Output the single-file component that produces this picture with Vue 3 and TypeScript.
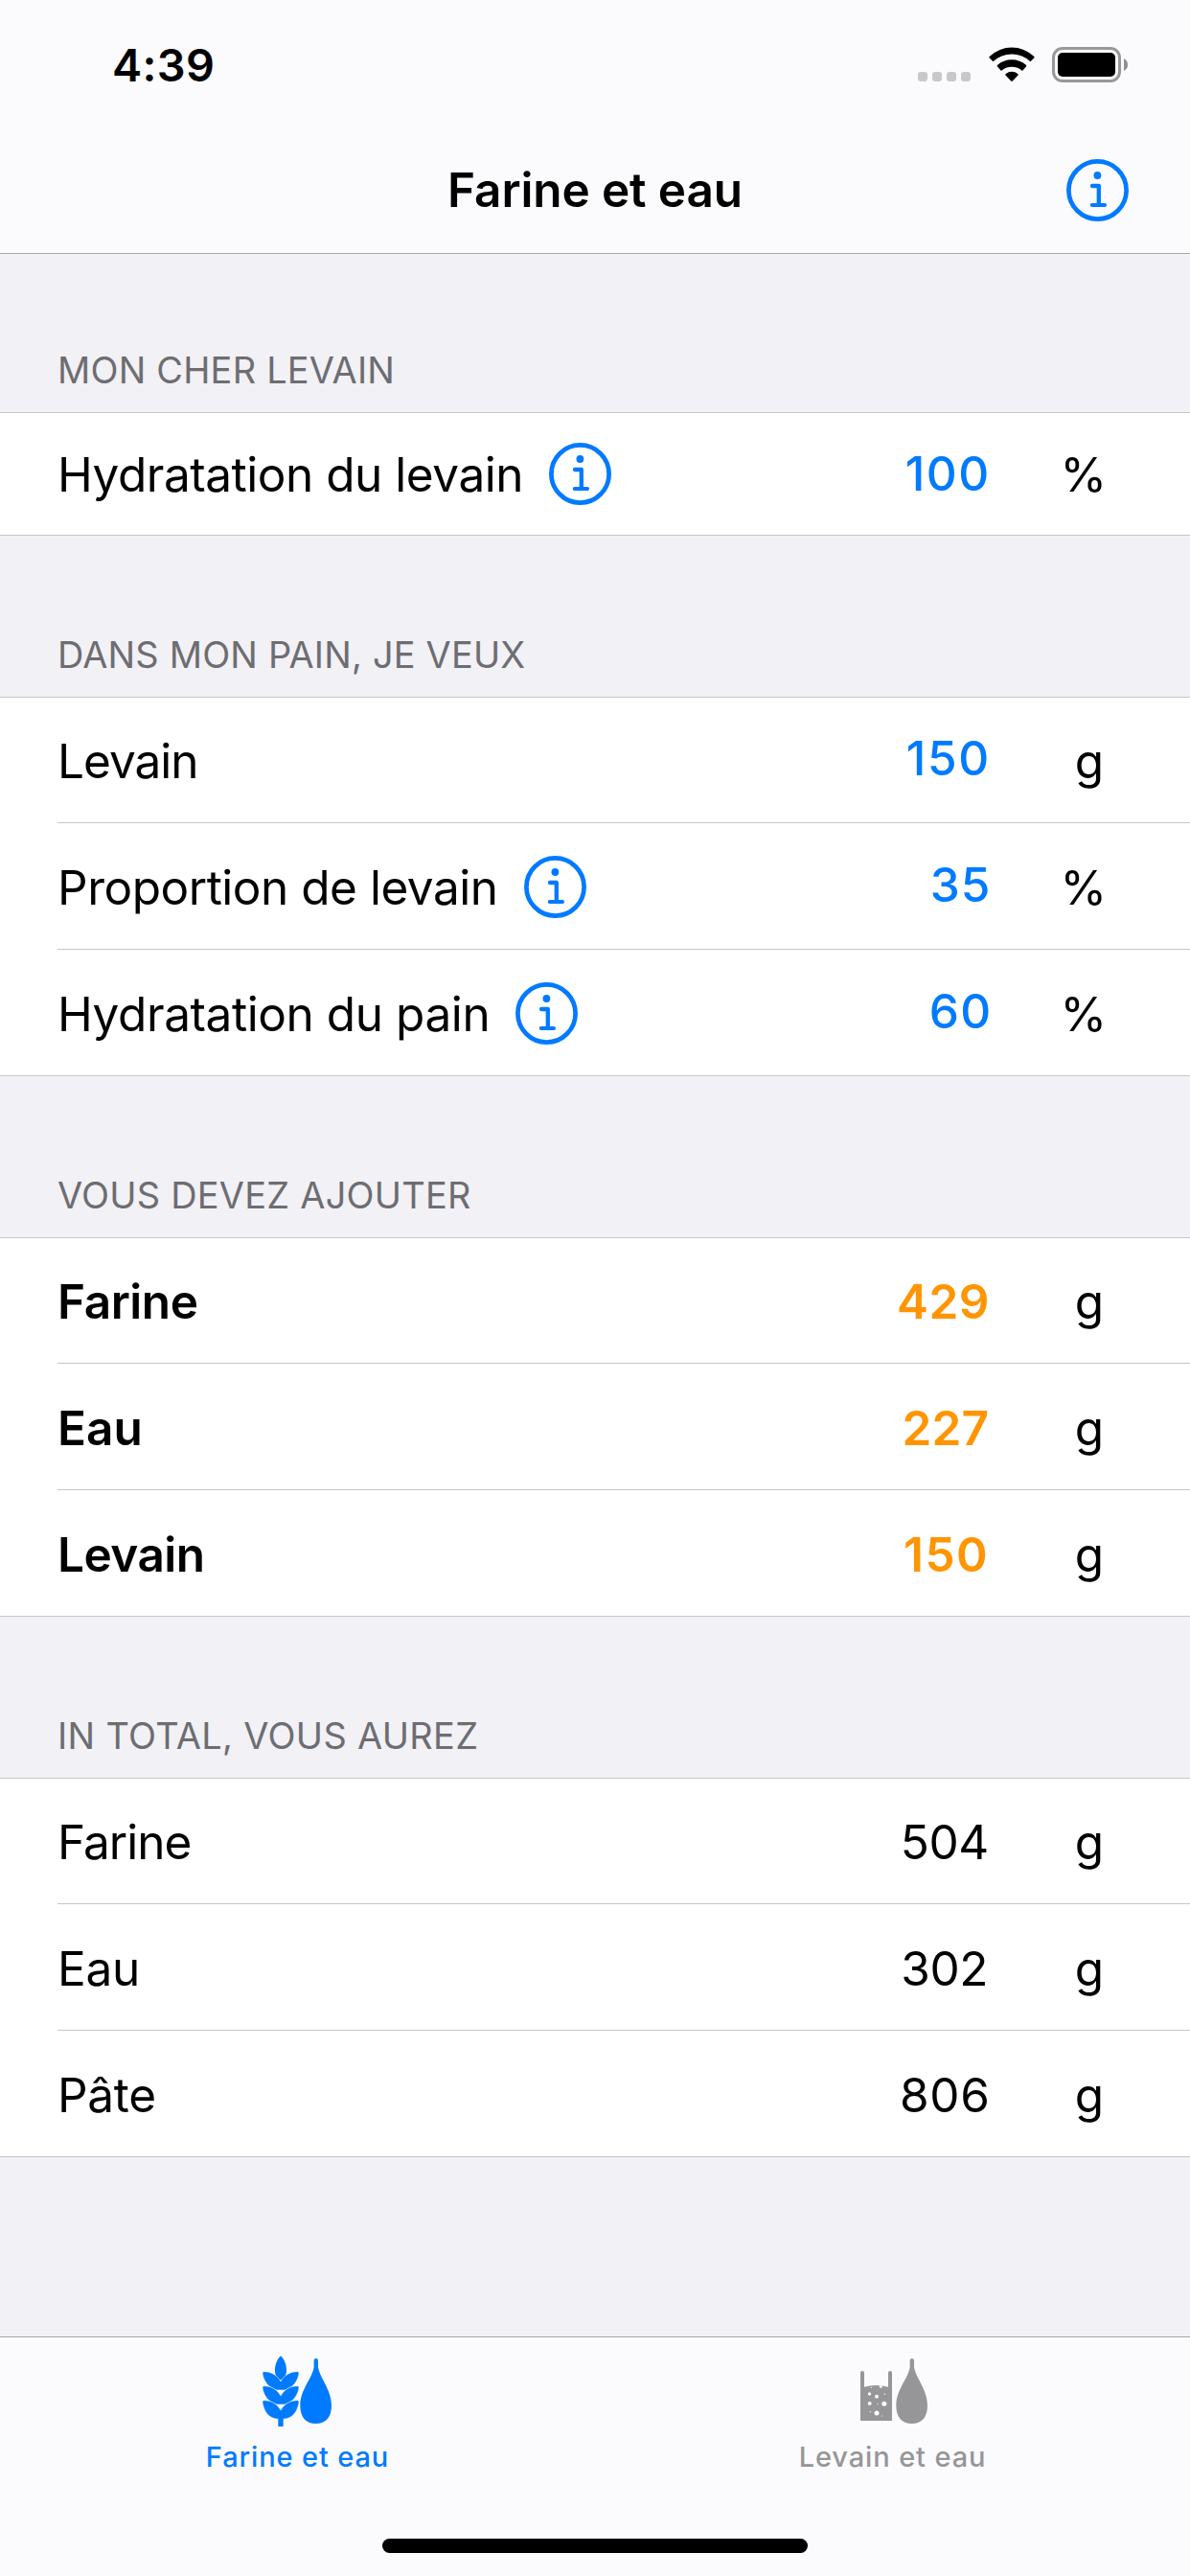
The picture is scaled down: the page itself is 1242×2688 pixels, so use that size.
<script setup lang="ts">
import { h } from 'vue'
import type { FunctionalComponent } from 'vue'

interface Row {
  label: string
  labelSpacing: number
  info?: boolean
  value: string
  valueSpacing: number
  valueEnd: number
  unit: '%' | 'g'
}

interface Section {
  title: string
  titleSpacing: number
  kind: 'single' | 'input' | 'result' | 'total'
  rows: Row[]
}

const sections: Section[] = [
  {
    title: 'MON CHER LEVAIN',
    titleSpacing: 0.23,
    kind: 'single',
    rows: [
      { label: 'Hydratation du levain', labelSpacing: -0.47, info: true, value: '100', valueSpacing: 1.55, valueEnd: 2.7, unit: '%' },
    ],
  },
  {
    title: 'DANS MON PAIN, JE VEUX',
    titleSpacing: 0.2,
    kind: 'input',
    rows: [
      { label: 'Levain', labelSpacing: -1.0, value: '150', valueSpacing: 1.73, valueEnd: 2.7, unit: 'g' },
      { label: 'Proportion de levain', labelSpacing: -0.48, info: true, value: '35', valueSpacing: 0.97, valueEnd: 1.7, unit: '%' },
      { label: 'Hydratation du pain', labelSpacing: -0.42, info: true, value: '60', valueSpacing: 1.42, valueEnd: 0.7, unit: '%' },
    ],
  },
  {
    title: 'VOUS DEVEZ AJOUTER',
    titleSpacing: 0.25,
    kind: 'result',
    rows: [
      { label: 'Farine', labelSpacing: -0.45, value: '429', valueSpacing: 0.5, valueEnd: 2.6, unit: 'g' },
      { label: 'Eau', labelSpacing: 0.1, value: '227', valueSpacing: 0.1, valueEnd: 3, unit: 'g' },
      { label: 'Levain', labelSpacing: -0.51, value: '150', valueSpacing: 1.47, valueEnd: 4.3, unit: 'g' },
    ],
  },
  {
    title: 'IN TOTAL, VOUS AUREZ',
    titleSpacing: 0.34,
    kind: 'total',
    rows: [
      { label: 'Farine', labelSpacing: -0.98, value: '504', valueSpacing: -0.36, valueEnd: 2.7, unit: 'g' },
      { label: 'Eau', labelSpacing: -0.22, value: '302', valueSpacing: -0.4, valueEnd: 3.5, unit: 'g' },
      { label: 'Pâte', labelSpacing: -0.31, value: '806', valueSpacing: 0.72, valueEnd: 2, unit: 'g' },
    ],
  },
]

const InfoIcon: FunctionalComponent = () =>
  h('svg', { width: 65, height: 65, viewBox: '0 0 65 65', fill: 'none', stroke: '#007aff' }, [
    h('circle', { cx: 32.5, cy: 32.5, r: 30.1, 'stroke-width': 4.7 }),
    h('circle', { cx: 32.4, cy: 17, r: 3.9, fill: '#007aff', stroke: 'none' }),
    h('path', { d: 'M27 28H33.8V47.5', 'stroke-width': 4.3, 'stroke-linecap': 'round', 'stroke-linejoin': 'round' }),
    h('path', { d: 'M26.8 48H40', 'stroke-width': 4.1, 'stroke-linecap': 'round' }),
  ])

const px = (n: number) => `${n}px`
</script>

<template>
  <div class="screen">
    <header class="top">
      <div class="status">
        <span class="time">4:39</span>
        <div class="indicators">
          <div class="dots"><i v-for="n in 4" :key="n" /></div>
          <svg class="wifi" width="48" height="36" viewBox="0 0 47.6 36">
            <path d="M0.6 11.6Q-0.4 10.6 0.8 9.8A33 33 0 0 1 46.8 9.8Q48 10.6 47 11.6L43.3 15.3A28.3 28.3 0 0 0 4.3 15.3Z" />
            <path d="M8.8 20.6Q8 19.6 9 18.8A22.5 22.5 0 0 1 38.6 18.8Q39.6 19.6 38.8 20.6L34.8 24.9A17 17 0 0 0 12.8 24.9Z" />
            <path d="M17.3 29.6Q16.6 28.8 17.6 28A10 10 0 0 1 30 28Q31 28.8 30.3 29.6L24.6 35.5Q23.8 36.2 23 35.5Z" />
          </svg>
          <div class="battery"><div class="charge" /></div>
          <svg class="nub" width="4" height="13" viewBox="0 0 4 13"><path d="M0 0Q4 2.2 4 6.5T0 13Z" fill="#8f8f92" /></svg>
        </div>
      </div>
      <div class="nav">
        <h1>Farine et eau</h1>
        <InfoIcon class="nav-info" />
      </div>
    </header>

    <main>
      <section v-for="s in sections" :key="s.title" :class="s.kind">
        <h2 :style="{ letterSpacing: px(s.titleSpacing) }">{{ s.title }}</h2>
        <div class="group">
          <div v-for="r in s.rows" :key="r.label" class="row">
            <span class="label" :style="{ letterSpacing: px(r.labelSpacing) }">{{ r.label }}</span>
            <InfoIcon v-if="r.info" class="info" />
            <span class="value" :style="{ letterSpacing: px(r.valueSpacing), paddingRight: px(r.valueEnd), marginRight: px(-r.valueSpacing) }">{{ r.value }}</span>
            <span class="unit" :class="{ gram: r.unit === 'g' }">{{ r.unit }}</span>
          </div>
        </div>
      </section>
    </main>

    <footer class="tabs">
      <div class="tab-row">
        <div class="tab active">
          <svg width="72.3" height="74" viewBox="282 114 217 222">
            <path d="M339 115C325 128 320 148 321 163C322 178 330 188 339 191C348 188 356 178 357 163C358 148 353 128 339 115Z" />
            <g stroke="#fbfbfd" stroke-width="1.6">
              <path
                v-for="dy in [0, 45]"
                :key="dy"
                :transform="`translate(0 ${dy})`"
                d="M286 164C306 164 327 173 339 195C351 173 372 164 392 164Q397 165 396 171C392 195 376 216 351 222H327C302 216 286 195 282 171Q281 165 286 164Z"
              />
              <path d="M286 254C306 254 327 263 339 285C351 263 372 254 392 254Q397 255 396 261C392 290 374 312 348 312.500H330C304 312 286 290 282 261Q281 255 286 254Z" />
            </g>
            <path d="M331 308H347V336H331Z" />
            <path d="M443 129Q443 123 449.500 123Q456 123 456 129V150C462 186 498 220 498 270C498 308 480 327 449 327C418 327 400 308 400 270C400 220 438 186 443 150Z" />
          </svg>
          <span>Farine et eau</span>
        </div>
        <div class="tab">
          <svg class="jar" width="70" height="74" viewBox="294 114 210 222">
            <path d="M294 168Q294 162 300 162T306 168V212Q343 202 381 212V168Q381 162 387 162T393 168V318H294Z" />
            <g fill="#fbfbfd">
              <circle cx="322.500" cy="234" r="5" />
              <circle cx="345" cy="242" r="6" />
              <circle cx="323" cy="264" r="6" />
              <circle cx="368.500" cy="265" r="7.500" />
              <circle cx="345" cy="294" r="7.500" />
              <circle cx="370" cy="235" r="2.200" />
              <circle cx="348" cy="266" r="1.800" />
              <circle cx="325" cy="290" r="2" />
              <circle cx="361" cy="303" r="1.800" />
              <circle cx="328" cy="214" r="2" />
              <circle cx="358" cy="211" r="4.500" />
            </g>
            <path d="M449 129Q449 123 455.500 123Q462 123 462 129V150C468 186 504 220 504 270C504 308 486 327 455 327C424 327 406 308 406 270C406 220 444 186 449 150Z" />
          </svg>
          <span>Levain et eau</span>
        </div>
      </div>
      <div class="home" />
    </footer>
  </div>
</template>

<style>
body {
  margin: 0;
}
</style>

<style scoped>
.screen {
  width: 1242px;
  height: 2688px;
  overflow: hidden;
  display: flex;
  flex-direction: column;
  background: #f2f1f6;
  color: #000;
  font-family: Inter, 'Liberation Sans', sans-serif;
  font-size: 49.5px;
  line-height: 60px;
}

svg {
  display: block;
  flex: none;
}

.top {
  flex: none;
  box-sizing: border-box;
  height: 265px;
  background: #fbfbfd;
  border-bottom: 1px solid #a7a7aa;
}

.status {
  height: 132px;
  display: flex;
  justify-content: space-between;
  align-items: flex-start;
}

.time {
  margin: 40px 0 0 117px;
  font-size: 46.8px;
  line-height: 56px;
  font-weight: 600;
  letter-spacing: 0.38px;
}

.indicators {
  display: flex;
  align-items: flex-start;
  margin: 49px 65px 0 0;
}

.dots {
  display: flex;
  gap: 5px;
  margin: 26px 18.5px 0 0;
}

.dots i {
  width: 10px;
  height: 10px;
  border-radius: 3px;
  background: #c8c8ca;
}

.battery {
  box-sizing: border-box;
  width: 72px;
  height: 37px;
  margin: 0 3px 0 18.5px;
  padding: 3px;
  border: 3px solid #98989b;
  border-radius: 11px;
}

.charge {
  height: 25px;
  border-radius: 5px;
  background: #000;
}

.nub {
  margin-top: 12px;
}

.nav {
  display: grid;
  grid-template-columns: 1fr auto 1fr;
  align-items: center;
  height: 132px;
}

.nav h1 {
  grid-column: 2;
  margin: 0;
  font-size: inherit;
  font-weight: 600;
  letter-spacing: -0.12px;
}

.nav-info {
  justify-self: end;
  margin-right: 64px;
}

main {
  flex: 1;
}

h2 {
  box-sizing: border-box;
  height: 168px;
  margin: 0;
  padding: 101px 0 0 60px;
  font-size: 37.9px;
  line-height: 46px;
  font-weight: 400;
  color: #6d6d72;
}

.single h2 {
  height: 165px;
  padding-top: 98px;
}

.group {
  background: #fff;
  border-top: 1px solid #c6c6c8;
  border-bottom: 1px solid #c6c6c8;
}

.row {
  box-sizing: border-box;
  display: flex;
  align-items: flex-end;
  height: 130px;
  margin-left: 60px;
  padding: 0 87px 34px 0;
}

.row + .row {
  height: 132px;
  border-top: 1px solid #c6c6c8;
}

.single .row {
  height: 127px;
  padding-bottom: 33px;
}

.label {
  white-space: nowrap;
}

.info {
  margin: 0 0 -2px 27px;
}

.value {
  margin-left: auto;
}

.single .value,
.input .value {
  color: #007aff;
  font-weight: 500;
}

.single .value {
  margin-bottom: 1px;
}

.input .value {
  margin-bottom: 3px;
}

.result .label,
.result .value {
  font-weight: 600;
}

.result .value {
  color: #ff9500;
}

.unit {
  box-sizing: border-box;
  width: 120px;
  text-align: right;
}

.gram {
  padding-right: 3px;
}

.tabs {
  flex: none;
  box-sizing: border-box;
  height: 250px;
  display: flex;
  flex-direction: column;
  align-items: center;
  background: #fbfbfd;
  border-top: 1px solid #a7a7aa;
}

.tab-row {
  display: flex;
  width: 100%;
  height: 210px;
}

.tab {
  flex: 1;
  display: flex;
  flex-direction: column;
  align-items: center;
  gap: 14px;
  padding-top: 19px;
  font-size: 29px;
  line-height: 35px;
  font-weight: 500;
  letter-spacing: 0.88px;
  color: #969699;
  fill: #969699;
}

.tab.active {
  color: #007aff;
  fill: #007aff;
}

.jar {
  margin-left: 3px;
}

.home {
  width: 444px;
  height: 15px;
  border-radius: 8px;
  background: #000;
}
</style>
